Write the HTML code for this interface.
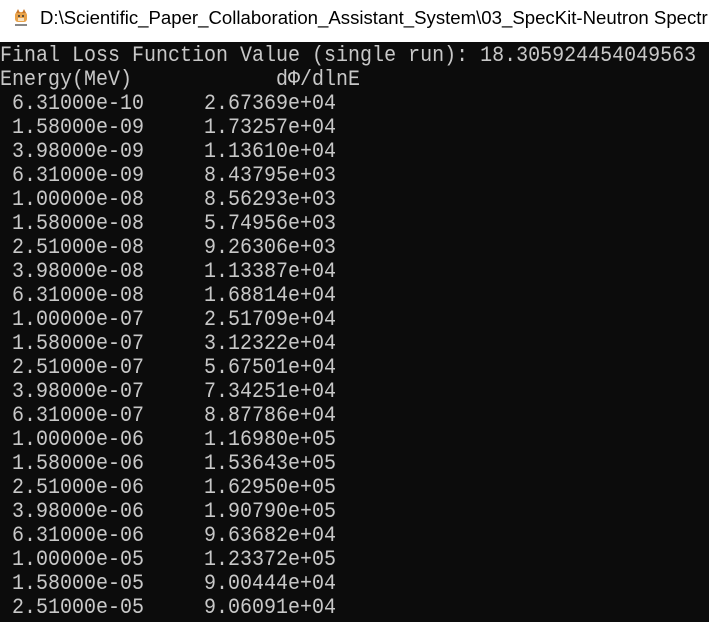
<!DOCTYPE html>
<html><head><meta charset="utf-8"><style>
html,body{margin:0;padding:0;width:709px;height:612px;overflow:hidden;background:#0c0c0c}
#t{position:absolute;left:0;top:0;width:709px;height:42px;background:#fff}
#t .ic{position:absolute;left:14px;top:9px;width:14px;height:18px}
#t .tx{position:absolute;left:40px;top:7px;font:18.6px "Liberation Sans","DejaVu Sans",sans-serif;color:#000;white-space:nowrap}
#c{position:absolute;left:0;top:45px;color:#c8c8c8;font:20px/24px "Liberation Mono",monospace;white-space:pre;}
#c div{height:24px;transform:scaleY(1.12);transform-origin:0 60%}
</style></head><body>
<div id="t">
<svg class="ic" viewBox="0 0 14 18"><rect x="1" y="3" width="12" height="10" rx="3" fill="#e8a24a"/><polygon points="2,4 4,0 6,4" fill="#c9782a"/><polygon points="8,4 10,0 12,4" fill="#c9782a"/><circle cx="5" cy="7" r="1" fill="#333"/><circle cx="9" cy="7" r="1" fill="#333"/><rect x="4" y="9" width="6" height="3" fill="#f5e0c0"/><rect x="1" y="15" width="12" height="2" fill="#888"/></svg>
<div class="tx">D:\Scientific_Paper_Collaboration_Assistant_System\03_SpecKit-Neutron Spectr</div>
</div>
<div id="c"><div>Final Loss Function Value (single run): 18.305924454049563</div><div>Energy(MeV)            dΦ/dlnE</div><div> 6.31000e-10     2.67369e+04</div><div> 1.58000e-09     1.73257e+04</div><div> 3.98000e-09     1.13610e+04</div><div> 6.31000e-09     8.43795e+03</div><div> 1.00000e-08     8.56293e+03</div><div> 1.58000e-08     5.74956e+03</div><div> 2.51000e-08     9.26306e+03</div><div> 3.98000e-08     1.13387e+04</div><div> 6.31000e-08     1.68814e+04</div><div> 1.00000e-07     2.51709e+04</div><div> 1.58000e-07     3.12322e+04</div><div> 2.51000e-07     5.67501e+04</div><div> 3.98000e-07     7.34251e+04</div><div> 6.31000e-07     8.87786e+04</div><div> 1.00000e-06     1.16980e+05</div><div> 1.58000e-06     1.53643e+05</div><div> 2.51000e-06     1.62950e+05</div><div> 3.98000e-06     1.90790e+05</div><div> 6.31000e-06     9.63682e+04</div><div> 1.00000e-05     1.23372e+05</div><div> 1.58000e-05     9.00444e+04</div><div> 2.51000e-05     9.06091e+04</div></div>
</body></html>
